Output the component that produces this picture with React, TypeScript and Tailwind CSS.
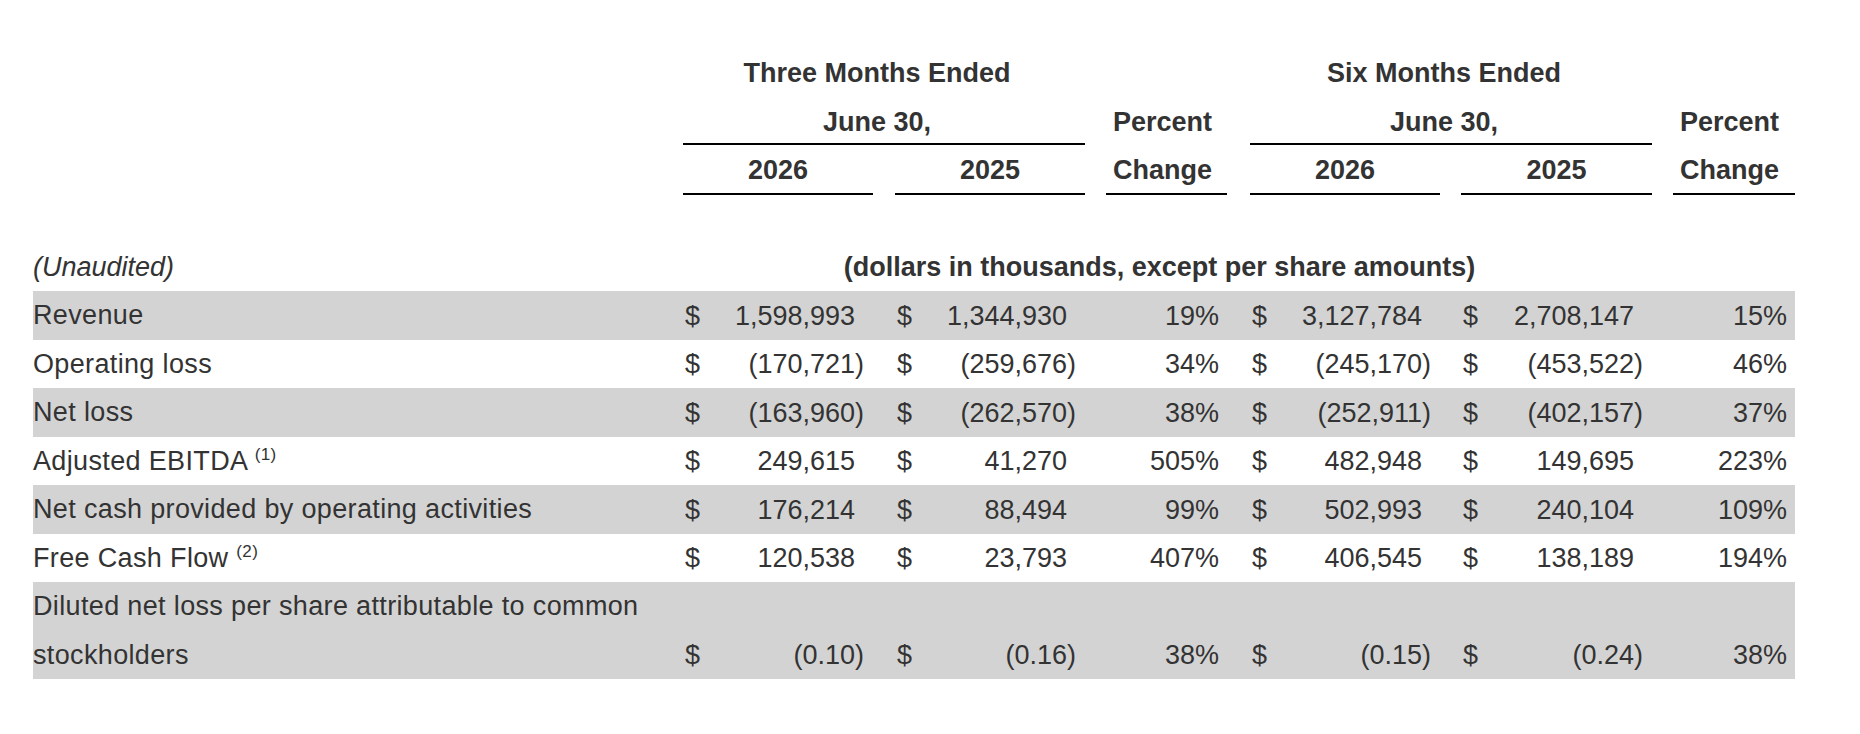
import React from 'react'

type Row = {
  label: React.ReactNode
  values: string[]
  shaded: boolean
}

const rows: Row[] = [
  { label: 'Revenue', values: ['1,598,993', '1,344,930', '19%', '3,127,784', '2,708,147', '15%'], shaded: true },
  { label: 'Operating loss', values: ['(170,721)', '(259,676)', '34%', '(245,170)', '(453,522)', '46%'], shaded: false },
  { label: 'Net loss', values: ['(163,960)', '(262,570)', '38%', '(252,911)', '(402,157)', '37%'], shaded: true },
  {
    label: (
      <>
        Adjusted EBITDA <sup className="relative -top-[10px] align-baseline text-[17px]">(1)</sup>
      </>
    ),
    values: ['249,615', '41,270', '505%', '482,948', '149,695', '223%'],
    shaded: false,
  },
  {
    label: 'Net cash provided by operating activities',
    values: ['176,214', '88,494', '99%', '502,993', '240,104', '109%'],
    shaded: true,
  },
  {
    label: (
      <>
        Free Cash Flow <sup className="relative -top-[10px] align-baseline text-[17px]">(2)</sup>
      </>
    ),
    values: ['120,538', '23,793', '407%', '406,545', '138,189', '194%'],
    shaded: false,
  },
  {
    label: (
      <>
        Diluted net loss per share attributable to common
        <br />
        stockholders
      </>
    ),
    values: ['(0.10)', '(0.16)', '38%', '(0.15)', '(0.24)', '38%'],
    shaded: true,
  },
]

// column widths and the gap before each column
const cols = [
  { w: 'w-[190px]', ml: 'ml-0' },
  { w: 'w-[190px]', ml: 'ml-[22px]' },
  { w: 'w-[121px]', ml: 'ml-[21px]' },
  { w: 'w-[190px]', ml: 'ml-[23px]' },
  { w: 'w-[191px]', ml: 'ml-[21px]' },
  { w: 'w-[122px]', ml: 'ml-[21px]' },
]

function MoneyCell({ value }: { value: string }) {
  const negative = value.startsWith('(')
  const num = negative ? value.slice(0, -1) : value
  return (
    <div className="flex h-[48.5px] items-center justify-between pt-[1px]">
      <span className="pl-[2px]">$</span>
      <span className="flex">
        <span>{num}</span>
        <span className="w-[18px] text-left">{negative ? ')' : ''}</span>
      </span>
    </div>
  )
}

function PercentCell({ value }: { value: string }) {
  return <div className="flex h-[48.5px] items-center justify-end pr-[8px] pt-[1px]">{value}</div>
}

export default function App() {
  return (
    <div
      className="min-h-screen bg-white pl-[33px] pt-[48px] text-[27px] leading-[48.5px] text-[#333333]"
      style={{ fontFamily: '"Liberation Sans", Arial, Helvetica, sans-serif' }}
    >
      <div className="w-[1762px]">
        {/* Header */}
        <div className="flex h-[48.5px] pt-[1px] font-bold">
          <div className="w-[650px]" />
          <div className="w-[402px] pr-[14px] text-center">Three Months Ended</div>
          <div className="ml-[21px] w-[121px]" />
          <div className="ml-[23px] w-[402px] pr-[14px] text-center">Six Months Ended</div>
          <div className="ml-[21px] w-[122px]" />
        </div>
        <div className="flex h-[48.5px] font-bold">
          <div className="w-[650px]" />
          <div className="w-[402px] border-b-2 border-black pr-[14px] pt-[1px] text-center">June 30,</div>
          <div className="ml-[21px] w-[121px] pl-[7px] pt-[1px]">Percent</div>
          <div className="ml-[23px] w-[402px] border-b-2 border-black pr-[14px] pt-[1px] text-center">June 30,</div>
          <div className="ml-[21px] w-[122px] pl-[7px] pt-[1px]">Percent</div>
        </div>
        <div className="flex h-[49.5px] font-bold">
          <div className="w-[650px]" />
          <div className="w-[190px] border-b-2 border-black pt-[1px] text-center">2026</div>
          <div className="ml-[22px] w-[190px] border-b-2 border-black pt-[1px] text-center">2025</div>
          <div className="ml-[21px] w-[121px] border-b-2 border-black pl-[7px] pt-[1px]">Change</div>
          <div className="ml-[23px] w-[190px] border-b-2 border-black pt-[1px] text-center">2026</div>
          <div className="ml-[21px] w-[191px] border-b-2 border-black pt-[1px] text-center">2025</div>
          <div className="ml-[21px] w-[122px] border-b-2 border-black pl-[7px] pt-[1px]">Change</div>
        </div>
        <div className="h-[47.5px]" />

        <div className="flex h-[49px] pt-[1px]">
          <div className="w-[650px] italic">(Unaudited)</div>
          <div className="w-[953px] text-center font-bold">(dollars in thousands, except per share amounts)</div>
        </div>

        {/* Body */}
        {rows.map((row, i) => (
          <div key={i} className={`flex items-end ${row.shaded ? 'bg-[#d3d3d3]' : 'bg-white'}`}>
            <div className="w-[650px] tracking-[0.35px]">{row.label}</div>
            {row.values.map((v, j) => (
              <div key={j} className={`${cols[j].w} ${cols[j].ml}`}>
                {v.endsWith('%') ? <PercentCell value={v} /> : <MoneyCell value={v} />}
              </div>
            ))}
          </div>
        ))}
      </div>
    </div>
  )
}
